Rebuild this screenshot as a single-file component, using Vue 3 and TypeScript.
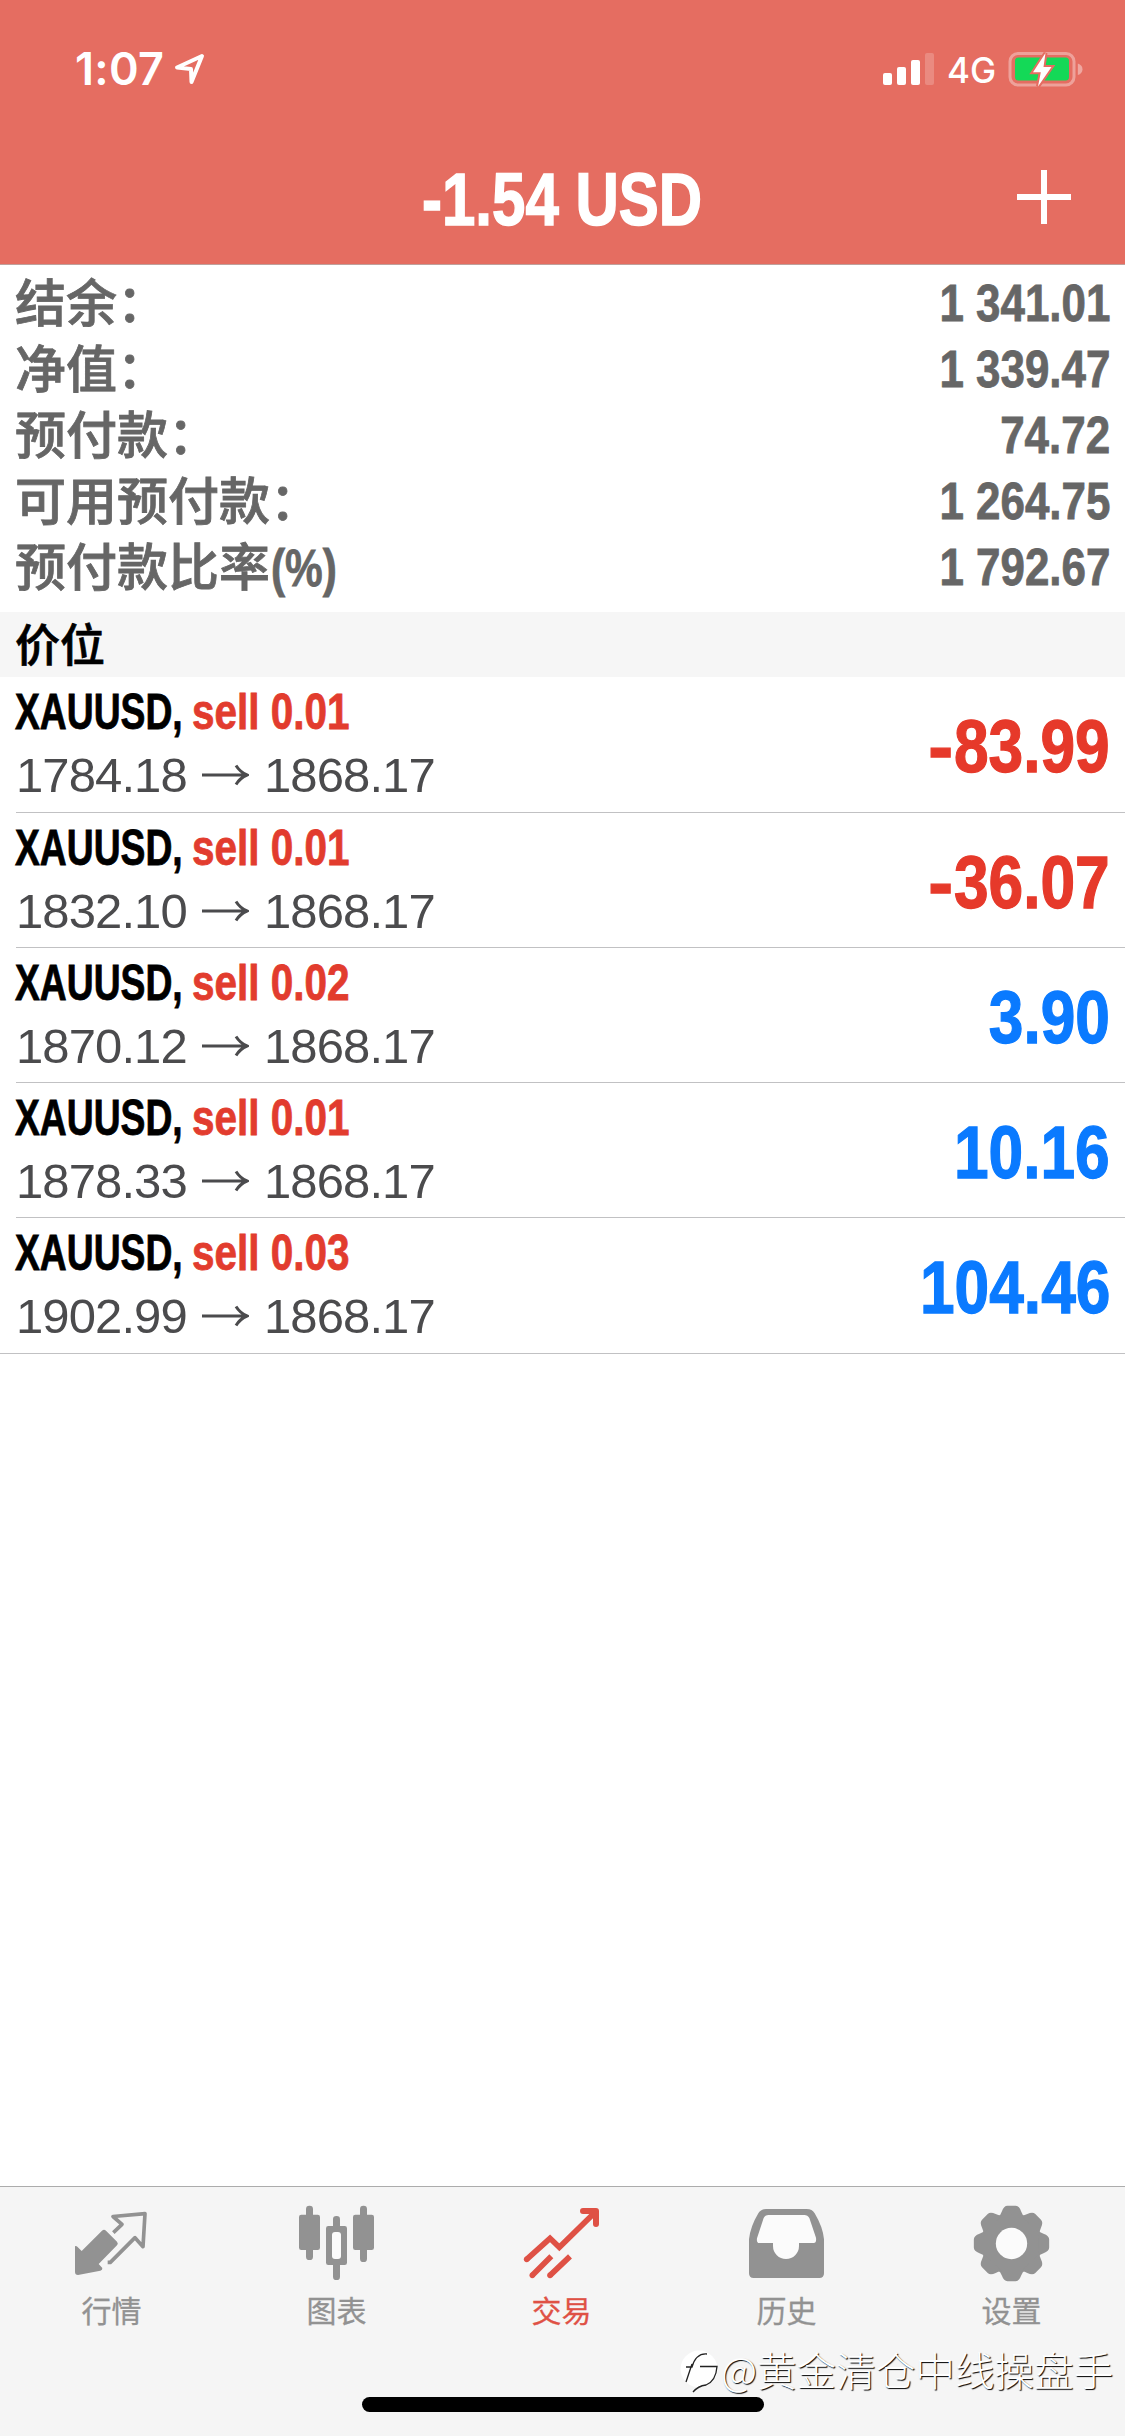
<script setup lang="ts">
interface SummaryRow {
  label: string
  suffix?: string
  value: string
}

interface Position {
  symbol: string
  side: string
  open: string
  current: string
  profit: string
}

interface Tab {
  id: string
  label: string
  viewBox: string
}

const summary: SummaryRow[] = [
  { label: '结余：', value: '1 341.01' },
  { label: '净值：', value: '1 339.47' },
  { label: '预付款：', value: '74.72' },
  { label: '可用预付款：', value: '1 264.75' },
  { label: '预付款比率', suffix: '(%)', value: '1 792.67' },
]

const positions: Position[] = [
  { symbol: 'XAUUSD,', side: 'sell 0.01', open: '1784.18', current: '1868.17', profit: '-83.99' },
  { symbol: 'XAUUSD,', side: 'sell 0.01', open: '1832.10', current: '1868.17', profit: '-36.07' },
  { symbol: 'XAUUSD,', side: 'sell 0.02', open: '1870.12', current: '1868.17', profit: '3.90' },
  { symbol: 'XAUUSD,', side: 'sell 0.01', open: '1878.33', current: '1868.17', profit: '10.16' },
  { symbol: 'XAUUSD,', side: 'sell 0.03', open: '1902.99', current: '1868.17', profit: '104.46' },
]

const tabs: Tab[] = [
  { id: 'quotes', label: '行情', viewBox: '-120 51 675 315' },
  { id: 'charts', label: '图表', viewBox: '555 51 675 315' },
  { id: 'trade', label: '交易', viewBox: '-90 51 675 315' },
  { id: 'history', label: '历史', viewBox: '585 51 675 315' },
  { id: 'settings', label: '设置', viewBox: '120 51 675 315' },
]

const activeTab = 'trade'
const teeth = [0, 45, 90, 135, 180, 225, 270, 315]

const isLoss = (profit: string): boolean => profit.startsWith('-')
</script>

<template>
  <div class="screen">
    <header class="header">
      <div class="status">
        <span class="time">1:07</span>
        <svg class="location" viewBox="172 50 36 38">
          <path d="M202 56 L177 67.500 L191 69 L191.500 82 Z" />
        </svg>
        <span class="spacer"></span>
        <svg class="signal" viewBox="882 50 52 38">
          <rect x="882" y="73" width="9" height="12" rx="2" />
          <rect x="896" y="67" width="9" height="18" rx="2" />
          <rect x="910" y="60" width="9" height="25" rx="2" />
          <rect x="924" y="53" width="9" height="32" rx="2" opacity="0.2" />
        </svg>
        <span class="network">4G</span>
        <svg class="battery" viewBox="1007 50 78 38">
          <rect x="1010" y="53.5" width="64" height="31.5" rx="8" fill="none" stroke="#fff" stroke-opacity="0.36" stroke-width="3" />
          <path d="M1077.800 63.500 Q1082.500 65 1082.500 69.200 Q1082.500 73.500 1077.800 75 Z" fill="#fff" fill-opacity="0.4" />
          <rect x="1015" y="57.500" width="54" height="23" rx="3.500" fill="#14d957" />
          <path d="M1045.500 53 L1033 72.200 H1040.800 L1038 86.500 L1051.500 67 H1043.500 Z" fill="#fff" stroke="#e56d61" stroke-width="4" paint-order="stroke" />
        </svg>
      </div>
      <div class="nav">
        <h1 class="title">-1.54 USD</h1>
        <svg class="plus" viewBox="0 0 54 54"><path d="M27 0 V54 M0 27 H54" /></svg>
      </div>
    </header>

    <section class="summary">
      <div v-for="row in summary" :key="row.label" class="summary-row">
        <span class="summary-label">{{ row.label }}<span v-if="row.suffix" class="suffix">{{ row.suffix }}</span></span>
        <span class="summary-value">{{ row.value }}</span>
      </div>
    </section>

    <div class="section-title">价位</div>

    <ul class="positions">
      <li v-for="(p, i) in positions" :key="i" class="position">
        <div class="details">
          <div class="deal">
            <span class="symbol">{{ p.symbol }}</span>
            <span class="side">{{ p.side }}</span>
          </div>
          <div class="prices">
            <span class="price">{{ p.open }}</span>
            <svg class="arrow" viewBox="0 0 48 24"><path d="M1 12 H45 M35 2.500 Q39 9 46 12 Q39 15 35 21.500" /></svg>
            <span class="price">{{ p.current }}</span>
          </div>
        </div>
        <span class="profit" :class="{ loss: isLoss(p.profit) }"><span v-if="isLoss(p.profit)" class="sign">-</span>{{ p.profit.replace('-', '') }}</span>
      </li>
    </ul>

    <nav class="tabbar">
      <div v-for="tab in tabs" :key="tab.id" class="tab" :class="{ active: tab.id === activeTab }">
        <svg class="tab-icon" :viewBox="tab.viewBox">
          <g v-if="tab.id === 'quotes'">
            <path d="M186 182 Q192 177 198 182 L231 215 Q236 221 231 226 L176 282 L187 294 Q188 301 181 302 L114 315 Q105 315 105 306 V229 Q108 226 112 230 L125 243 Z" fill="currentColor" />
            <path d="M220 188 L246 163 L219 139.500 L315 131 L309 230 L285 203 L211 277 L203 277" fill="none" stroke="currentColor" stroke-width="11" stroke-linejoin="round" />
          </g>
          <g v-else-if="tab.id === 'charts'">
            <g fill="currentColor">
              <rect x="777" y="134" width="63" height="106" rx="7" />
              <rect x="798" y="107" width="21" height="163" rx="10" />
              <rect x="939" y="134" width="63" height="106" rx="7" />
              <rect x="960" y="107" width="21" height="169" rx="10" />
              <rect x="858" y="168" width="63" height="117" rx="7" />
              <rect x="879" y="138" width="21" height="192" rx="10" />
            </g>
            <rect x="876" y="186" width="27" height="81" rx="9" fill="#fbfbfb" />
          </g>
          <g v-else-if="tab.id === 'trade'" fill="none" stroke="currentColor" stroke-width="17" stroke-linejoin="miter">
            <path d="M140 268 L210 205 L238 232 L346 126" />
            <path d="M309 123 H348 V162" stroke-width="18" stroke-linecap="round" stroke-linejoin="round" />
            <path d="M157 316 L214 259 M210 316 L270 259" />
            <g fill="currentColor" stroke="none">
              <circle cx="140" cy="268" r="8.500" />
              <circle cx="157" cy="316" r="8.500" />
              <circle cx="210" cy="316" r="8.500" />
            </g>
          </g>
          <g v-else-if="tab.id === 'history'">
            <path d="M858 117 H980 Q997 117 1004 130 Q1029 172 1032 208 V310 Q1032 324 1018 324 H821 Q807 324 807 310 V208 Q811 170 835 130 Q842 117 858 117 Z" fill="currentColor" />
            <path d="M866 135 H973 Q983 135 988 144 L1008 203 Q1010 219 1001 219 H957 V228 A39 39 0 0 1 879 228 V219 H838 Q829 219 831 205 L851 144 Q855 135 866 135 Z" fill="#fbfbfb" />
          </g>
          <g v-else>
            <g fill="currentColor" transform="translate(454.500 220.500)">
              <circle r="89" />
              <path v-for="a in teeth" :key="a" :transform="`rotate(${a})`" d="M-40 -80 Q-33 -84 -29 -96 Q-23 -113 -12 -113 H12 Q23 -113 29 -96 Q33 -84 40 -80 Z" />
            </g>
            <circle cx="454.500" cy="220.500" r="47" fill="#fbfbfb" />
          </g>
        </svg>
        <span class="tab-label">{{ tab.label }}</span>
      </div>
      <div class="home-indicator"></div>
      <div class="watermark">
        <svg class="mark" viewBox="0 0 40 46">
          <circle cx="19" cy="20" r="18.500" fill="#fff" />
          <path d="M6 33 L12 15 M6 18 H12 Q16 4 27 5 M20 17.500 H37 Q36 32 26 36 Q18 37 13 43" fill="none" stroke="#222" stroke-width="1.300" />
        </svg>
        <span>@黄金清仓中线操盘手</span>
      </div>
    </nav>
  </div>
</template>

<style>
body {
  margin: 0;
  background: #fff;
}
</style>

<style scoped>
.screen {
  display: flex;
  flex-direction: column;
  width: 1125px;
  height: 2436px;
  overflow: hidden;
  background: #fff;
  font-family: "Liberation Sans", "Noto Sans CJK SC", sans-serif;
}

.header {
  box-sizing: border-box;
  height: 265px;
  background: #e56d61;
  border-bottom: 1px solid #c0a09c;
  color: #fff;
}

.status {
  display: flex;
  align-items: center;
  height: 138px;
  padding: 0 40px 0 75px;
}

.time {
  width: 97px;
  font: 600 45px/60px Inter, sans-serif;
  letter-spacing: 0.300px;
}

.location {
  width: 36px;
  height: 38px;
  fill: none;
  stroke: #fff;
  stroke-width: 4;
  stroke-linejoin: round;
}

.spacer {
  flex: 1;
}

.signal {
  width: 52px;
  height: 38px;
  fill: #fff;
}

.network {
  width: 60px;
  margin-left: 12px;
  font: 500 35px/48px Inter, sans-serif;
  padding-top: 2px;
}

.battery {
  width: 78px;
  height: 38px;
}

.nav {
  display: grid;
  grid-template-columns: 1fr auto 1fr;
  align-items: center;
  height: 118px;
  padding-right: 54px;
  padding-left: 54px;
}

.title {
  grid-column: 2;
  margin: 3px 0 0;
  font-size: 75px;
  line-height: 84px;
  font-weight: 700;
  white-space: nowrap;
  transform: scaleX(0.8);
  -webkit-text-stroke: 1.500px currentColor;
}

.plus {
  justify-self: end;
  width: 54px;
  height: 54px;
  fill: none;
  stroke: #fff;
  stroke-width: 6;
}

.summary {
  box-sizing: border-box;
  height: 347px;
  padding: 5px 15px 0 15px;
  color: #666;
}

.summary-row {
  display: flex;
  justify-content: space-between;
  height: 66px;
  line-height: 66px;
  white-space: nowrap;
}

.summary-label {
  padding-top: 2px;
  font-size: 51px;
  font-weight: 500;
  -webkit-text-stroke: 0.800px currentColor;
}

.suffix {
  display: inline-block;
  margin-left: 1px;
  font-weight: 700;
  transform: scaleX(0.83);
  transform-origin: left;
}

.summary-value {
  font-size: 52px;
  font-weight: 700;
  transform: scaleX(0.845);
  transform-origin: right;
  -webkit-text-stroke: 0.800px currentColor;
}

.section-title {
  height: 65px;
  padding-left: 15px;
  background: #f6f6f6;
  color: #000;
  font-size: 45px;
  font-weight: 500;
  line-height: 69px;
  -webkit-text-stroke: 0.700px currentColor;
}

.positions {
  flex: 1;
  margin: 0;
  padding: 0;
  list-style: none;
}

.position {
  box-sizing: border-box;
  display: flex;
  align-items: center;
  justify-content: space-between;
  height: 135px;
  margin-left: 16px;
  padding-right: 15px;
  border-bottom: 1px solid #c1c1c3;
}

.position:first-child {
  height: 136px;
}

.position:last-child {
  height: 136px;
  margin-left: 0;
  padding-left: 16px;
}

.details {
  padding-bottom: 2px;
}

.deal {
  display: flex;
  height: 63px;
  font-size: 50px;
  font-weight: 700;
  line-height: 63px;
  white-space: nowrap;
}

.symbol,
.side {
  flex: none;
  transform-origin: left;
  -webkit-text-stroke: 0.800px currentColor;
}

.symbol {
  width: 177px;
  margin-left: -1px;
  color: #000;
  transform: scaleX(0.745);
}

.side {
  color: #e23c2e;
  transform: scaleX(0.81);
}

.prices {
  display: flex;
  align-items: center;
  height: 62px;
  color: #4b4b4d;
}

.price {
  width: 170px;
  font-size: 49px;
  letter-spacing: -0.900px;
  line-height: 62px;
}

.arrow {
  width: 48px;
  height: 24px;
  margin: 0 15px;
  fill: none;
  stroke: currentColor;
  stroke-width: 3;
}

.profit {
  margin-top: 3px;
  color: #0a7aff;
  font-size: 75px;
  font-weight: 700;
  transform: scaleX(0.83);
  transform-origin: right;
  -webkit-text-stroke: 1.300px currentColor;
}

.profit.loss {
  color: #e6392a;
}

.sign {
  display: inline-block;
  margin-right: 1px;
  transform: scaleX(1.2);
  transform-origin: right;
}

.tabbar {
  position: relative;
  box-sizing: border-box;
  display: flex;
  height: 250px;
  background: #f5f5f5;
  border-top: 1px solid #acacac;
}

.tab {
  display: flex;
  flex-direction: column;
  align-items: center;
  width: 225px;
  color: #929292;
}

.tab-icon {
  width: 225px;
  height: 105px;
}

.tab-label {
  margin-right: 2px;
  font-size: 30px;
  line-height: 40px;
  -webkit-text-stroke: 0.300px currentColor;
}

.active {
  color: #df5145;
}

.home-indicator {
  position: absolute;
  top: 210px;
  left: 362px;
  width: 402px;
  height: 15px;
  border-radius: 8px;
  background: #000;
}

.watermark {
  position: absolute;
  top: 154px;
  left: 680px;
  display: flex;
  align-items: center;
  color: #fff;
  font: 300 39.600px/56px "Noto Sans CJK SC", sans-serif;
  text-shadow: 1px 1px 1px #000;
  white-space: nowrap;
}

.mark {
  width: 40px;
  height: 46px;
  margin-top: 5px;
  margin-right: 1px;
}
</style>
